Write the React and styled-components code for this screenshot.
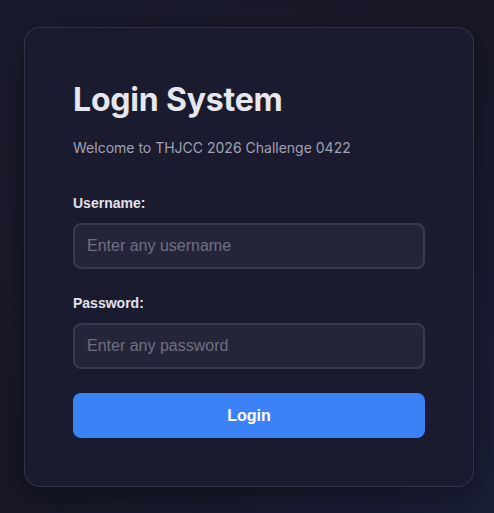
import React from "react";
import styled, { createGlobalStyle } from "styled-components";

const Global = createGlobalStyle`
  html, body { margin: 0; padding: 0; }
  body {
    min-height: 513px;
    background: linear-gradient(135deg, #1a1a2e 0%, #171727 50%, #1a1f38 100%);
    font-family: "Liberation Sans", Arial, sans-serif;
  }
  * { box-sizing: border-box; }
`;

const Page = styled.div`
  min-height: 513px;
  padding: 27px 20px 20px 24px;
`;

const Card = styled.div`
  width: 450px;
  background: #1b1b2f;
  border: 1px solid rgba(255, 255, 255, 0.1);
  border-radius: 16px;
  padding: 48px;
  box-shadow: 0 10px 30px rgba(0, 0, 0, 0.35);
`;

const Title = styled.h1`
  margin: 0;
  font-family: Inter, "Noto Sans", sans-serif;
  font-weight: 700;
  font-size: 32px;
  line-height: 48px;
  letter-spacing: -0.2px;
  color: #e6e6ee;
`;

const Subtitle = styled.p`
  margin: 16px 0 39px;
  font-family: Inter, "Noto Sans", sans-serif;
  font-size: 14px;
  line-height: 16px;
  color: #a2a2b4;
`;

const Field = styled.div`
  display: flex;
  flex-direction: column;
  gap: 12px;
  & + & { margin-top: 26px; }
`;

const Label = styled.label`
  font-size: 14px;
  font-weight: 700;
  line-height: 16px;
  color: #e2e2ea;
`;

const Input = styled.input`
  width: 100%;
  height: 46px;
  padding: 0 12px;
  background: #25253a;
  border: 2px solid #3a3a4f;
  border-radius: 8px;
  color: #e2e2ea;
  font-family: "Liberation Sans", Arial, sans-serif;
  font-size: 16px;
  outline: none;
  &::placeholder { color: #6f6f82; }
`;

const Button = styled.button`
  display: block;
  width: 100%;
  height: 45px;
  margin-top: 24px;
  background: #3b82f6;
  border: none;
  border-radius: 8px;
  color: #ffffff;
  font-family: "Liberation Sans", Arial, sans-serif;
  font-size: 16px;
  font-weight: 700;
  cursor: pointer;
`;

export default function App() {
  return (
    <>
      <Global />
      <Page>
        <Card>
          <Title>Login System</Title>
          <Subtitle>Welcome to THJCC 2026 Challenge 0422</Subtitle>
          <Field>
            <Label htmlFor="u">Username:</Label>
            <Input id="u" placeholder="Enter any username" />
          </Field>
          <Field>
            <Label htmlFor="p">Password:</Label>
            <Input id="p" type="password" placeholder="Enter any password" />
          </Field>
          <Button>Login</Button>
        </Card>
      </Page>
    </>
  );
}
